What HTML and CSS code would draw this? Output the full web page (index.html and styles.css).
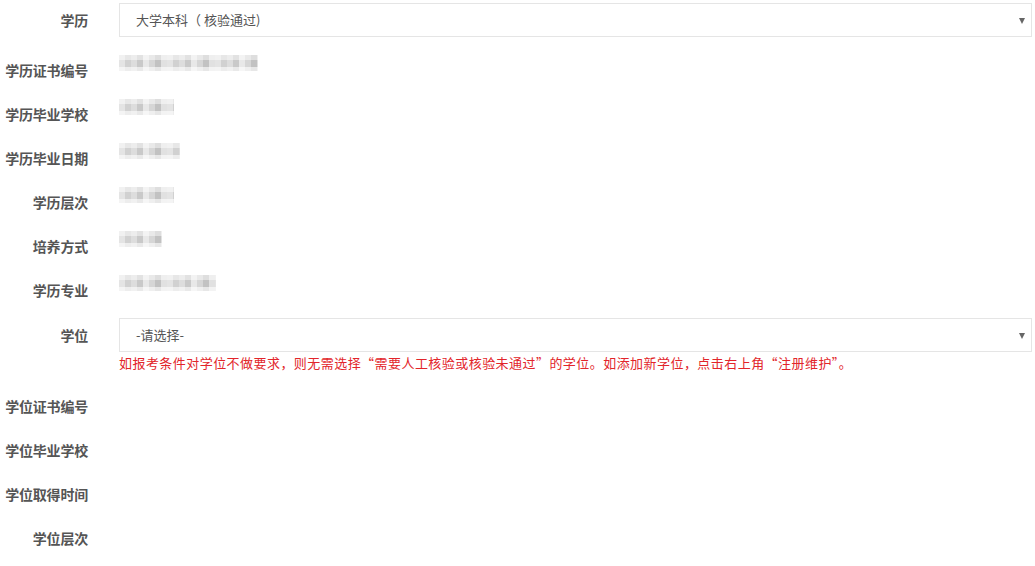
FILE: index.html
```html
<!DOCTYPE html>
<html lang="zh-CN">
<head>
<meta charset="utf-8">
<title>学历信息</title>
<link rel="stylesheet" href="styles.css">
</head>
<body>
<form class="form">
  <div class="group group-select first">
    <label class="label">学历</label>
    <div class="control">
      <div class="select"><span class="select-text">大学本科（ 核验通过)</span><span class="caret"></span></div>
    </div>
  </div>
  <div class="group group-static">
    <label class="label">学历证书编号</label>
    <div class="control"><div class="blur b1"></div></div>
  </div>
  <div class="group group-static">
    <label class="label">学历毕业学校</label>
    <div class="control"><div class="blur b2"></div></div>
  </div>
  <div class="group group-static">
    <label class="label">学历毕业日期</label>
    <div class="control"><div class="blur b3"></div></div>
  </div>
  <div class="group group-static">
    <label class="label">学历层次</label>
    <div class="control"><div class="blur b4"></div></div>
  </div>
  <div class="group group-static">
    <label class="label">培养方式</label>
    <div class="control"><div class="blur b5"></div></div>
  </div>
  <div class="group group-static">
    <label class="label">学历专业</label>
    <div class="control"><div class="blur b6"></div></div>
  </div>
  <div class="group group-select with-help">
    <label class="label">学位</label>
    <div class="control">
      <div class="select"><span class="select-text">-请选择-</span><span class="caret"></span></div>
      <p class="help">如报考条件对学位不做要求，则无需选择“需要人工核验或核验未通过”的学位。如添加新学位，点击右上角“注册维护”。</p>
    </div>
  </div>
  <div class="group group-static">
    <label class="label">学位证书编号</label>
    <div class="control"></div>
  </div>
  <div class="group group-static">
    <label class="label">学位毕业学校</label>
    <div class="control"></div>
  </div>
  <div class="group group-static">
    <label class="label">学位取得时间</label>
    <div class="control"></div>
  </div>
  <div class="group group-static">
    <label class="label">学位层次</label>
    <div class="control"></div>
  </div>
</form>
</body>
</html>
```

FILE: styles.css
```css
html, body {
  margin: 0;
  padding: 0;
  background: #fff;
}
body {
  font-family: "Noto Sans CJK SC", "Microsoft YaHei", "Liberation Sans", sans-serif;
  color: #555;
  overflow: hidden;
}
.form {
  padding: 3px 3px 0 0;
}
.group {
  display: flex;
  align-items: flex-start;
  min-height: 34px;
  margin-bottom: 10px;
}
.group.first {
  margin-bottom: 17px;
}
.group.with-help {
  margin-bottom: 18px;
}
.label {
  flex: 0 0 88px;
  width: 88px;
  margin-right: 31px;
  text-align: right;
  font-size: 14px;
  font-weight: bold;
  line-height: 20px;
  padding-top: 6px;
  color: #555;
  white-space: nowrap;
  letter-spacing: -0.2px;
}
.group-select .label {
  padding-top: 7px;
}
.control {
  flex: 1 1 auto;
  min-width: 0;
}
.select {
  height: 34px;
  box-sizing: border-box;
  border: 1px solid #e5e5e5;
  display: flex;
  align-items: center;
  justify-content: space-between;
  padding: 0 6px 0 16px;
  font-size: 13px;
  color: #555;
  background: #fff;
}
.select-text {
  line-height: 20px;
}
.caret {
  width: 0;
  height: 0;
  border-left: 3.5px solid transparent;
  border-right: 3.5px solid transparent;
  border-top: 6px solid #666;
  margin-top: 1px;
}
.help {
  margin: 2px 0 0 0;
  font-size: 13px;
  line-height: 18px;
  color: #e2252a;
  white-space: nowrap;
  letter-spacing: 0.45px;
}
.blur {
  height: 16px;
  margin-top: 1px;
  filter: blur(0.6px);
  background:
    repeating-linear-gradient(90deg,
      #e2e2e2 0 6px, #cdcdcd 6px 12px, #dadada 12px 18px,
      #c4c4c4 18px 24px, #e6e6e6 24px 30px, #d2d2d2 30px 36px,
      #bcbcbc 36px 42px, #dedede 42px 48px);
  opacity: 0.9;
  -webkit-mask-image: linear-gradient(180deg, rgba(0,0,0,0.55) 0 5px, #000 5px 12px, rgba(0,0,0,0.4) 12px 16px);
  mask-image: linear-gradient(180deg, rgba(0,0,0,0.55) 0 5px, #000 5px 12px, rgba(0,0,0,0.4) 12px 16px);
}
.b1 { width: 139px; }
.b2 { width: 55px; }
.b3 { width: 61px; }
.b4 { width: 55px; }
.b5 { width: 43px; }
.b6 { width: 97px; }
```
